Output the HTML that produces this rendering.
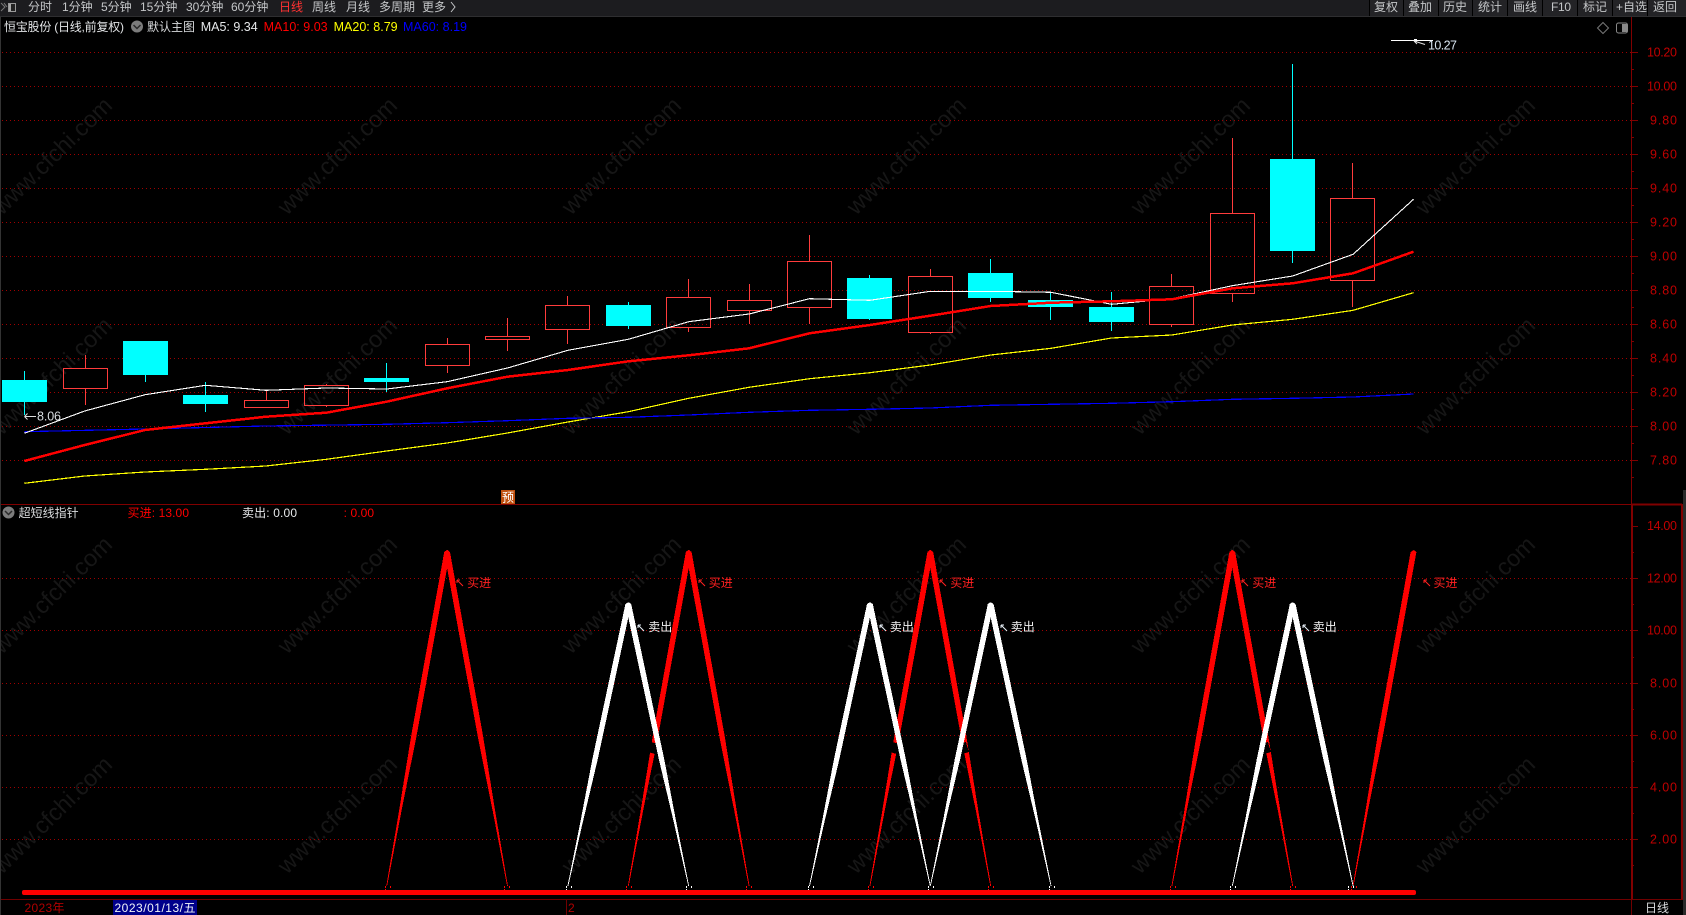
<!DOCTYPE html>
<html><head><meta charset="utf-8"><title>恒宝股份</title>
<style>
html,body{margin:0;padding:0;background:#000;overflow:hidden}
svg{display:block;position:absolute;left:0;top:0}
text{font-family:"Liberation Sans","Noto Sans CJK SC",sans-serif;font-size:12px;white-space:pre}
.m{fill:#c4c6c8}
.ax{fill:#c00000;font-size:12.5px}
.wm{fill:#161616;font-size:23.5px}
</style></head><body>
<svg width="1686" height="915" viewBox="0 0 1686 915" xmlns="http://www.w3.org/2000/svg">
<defs><polygon id="leg" points="-0.006,0 0,-2.9 0.55,-2.7 0.78,-1.2 1,-0.4 1,0.4 0.78,1.2 0.55,2.7 0,2.9"/></defs>
<rect width="1686" height="915" fill="#000"/>

<!-- watermarks -->
<g>
<text class="wm" textLength="156" transform="translate(2,216) rotate(-44.3)">www.cfchi.com</text>
<text class="wm" textLength="156" transform="translate(287,216) rotate(-44.3)">www.cfchi.com</text>
<text class="wm" textLength="156" transform="translate(571,216) rotate(-44.3)">www.cfchi.com</text>
<text class="wm" textLength="156" transform="translate(856,216) rotate(-44.3)">www.cfchi.com</text>
<text class="wm" textLength="156" transform="translate(1140,216) rotate(-44.3)">www.cfchi.com</text>
<text class="wm" textLength="156" transform="translate(1425,216) rotate(-44.3)">www.cfchi.com</text>
<text class="wm" textLength="156" transform="translate(2,436) rotate(-44.3)">www.cfchi.com</text>
<text class="wm" textLength="156" transform="translate(287,436) rotate(-44.3)">www.cfchi.com</text>
<text class="wm" textLength="156" transform="translate(571,436) rotate(-44.3)">www.cfchi.com</text>
<text class="wm" textLength="156" transform="translate(856,436) rotate(-44.3)">www.cfchi.com</text>
<text class="wm" textLength="156" transform="translate(1140,436) rotate(-44.3)">www.cfchi.com</text>
<text class="wm" textLength="156" transform="translate(1425,436) rotate(-44.3)">www.cfchi.com</text>
<text class="wm" textLength="156" transform="translate(2,655) rotate(-44.3)">www.cfchi.com</text>
<text class="wm" textLength="156" transform="translate(287,655) rotate(-44.3)">www.cfchi.com</text>
<text class="wm" textLength="156" transform="translate(571,655) rotate(-44.3)">www.cfchi.com</text>
<text class="wm" textLength="156" transform="translate(856,655) rotate(-44.3)">www.cfchi.com</text>
<text class="wm" textLength="156" transform="translate(1140,655) rotate(-44.3)">www.cfchi.com</text>
<text class="wm" textLength="156" transform="translate(1425,655) rotate(-44.3)">www.cfchi.com</text>
<text class="wm" textLength="156" transform="translate(2,875) rotate(-44.3)">www.cfchi.com</text>
<text class="wm" textLength="156" transform="translate(287,875) rotate(-44.3)">www.cfchi.com</text>
<text class="wm" textLength="156" transform="translate(571,875) rotate(-44.3)">www.cfchi.com</text>
<text class="wm" textLength="156" transform="translate(856,875) rotate(-44.3)">www.cfchi.com</text>
<text class="wm" textLength="156" transform="translate(1140,875) rotate(-44.3)">www.cfchi.com</text>
<text class="wm" textLength="156" transform="translate(1425,875) rotate(-44.3)">www.cfchi.com</text>
</g>

<!-- toolbar -->
<rect x="0" y="0" width="1686" height="16" fill="#1c1c1f"/>
<rect x="0" y="16" width="1686" height="1" fill="#2e2e30"/>
<rect x="1369" y="0" width="317" height="16" fill="#232326"/>
<g fill="#000" shape-rendering="crispEdges">
<rect x="1369" y="0" width="1" height="16"/><rect x="1403" y="0" width="1" height="16"/><rect x="1438" y="0" width="1" height="16"/><rect x="1472" y="0" width="1" height="16"/><rect x="1507" y="0" width="1" height="16"/><rect x="1542" y="0" width="1" height="16"/><rect x="1577" y="0" width="1" height="16"/><rect x="1612" y="0" width="1" height="16"/><rect x="1647" y="0" width="1" height="16"/>
</g>
<path d="M1 3L5 7L1 11M4 3L7 7" fill="none" stroke="#777" stroke-width="1"/>
<rect x="8.5" y="3.5" width="7" height="8" fill="#222" stroke="#999"/>
<rect x="9" y="4" width="2" height="7" fill="#aaa"/>
<g class="m">
<text class="m" x="28" y="11">分时</text>
<text class="m" x="62" y="11">1分钟</text>
<text class="m" x="101" y="11">5分钟</text>
<text class="m" x="140" y="11">15分钟</text>
<text class="m" x="186" y="11">30分钟</text>
<text class="m" x="231" y="11">60分钟</text>
<text x="279" y="11" fill="#ff3232">日线</text>
<text class="m" x="312" y="11">周线</text>
<text class="m" x="346" y="11">月线</text>
<text class="m" x="379" y="11">多周期</text>
<text class="m" x="422" y="11">更多</text>
<path d="M451 2L455 7L451 12" fill="none" stroke="#c4c6c8"/>
<text class="m" x="1374" y="11">复权</text>
<text class="m" x="1408" y="11">叠加</text>
<text class="m" x="1443" y="11">历史</text>
<text class="m" x="1478" y="11">统计</text>
<text class="m" x="1513" y="11">画线</text>
<text class="m" x="1551" y="11" textLength="20">F10</text>
<text class="m" x="1583" y="11">标记</text>
<text class="m" x="1616" y="11">+自选</text>
<text class="m" x="1653" y="11">返回</text>
</g>

<!-- header -->
<text x="4" y="31" fill="#e2e4e6" textLength="120">恒宝股份 (日线,前复权)</text>
<circle cx="137" cy="26.5" r="6" fill="#7c7c7c"/>
<path d="M133.5 25L137 28.5L140.5 25" fill="none" stroke="#2a2a2a" stroke-width="1.5"/>
<text x="147" y="31" fill="#d8dadc">默认主图</text>
<text x="200.7" y="31" fill="#e6e8ea" style="font-size:12.5px" textLength="57">MA5: 9.34</text>
<text x="263.6" y="31" fill="#ff0000" style="font-size:12.5px" textLength="64">MA10: 9.03</text>
<text x="333.6" y="31" fill="#ffff00" style="font-size:12.5px" textLength="64">MA20: 8.79</text>
<text x="403" y="31" fill="#0000ff" style="font-size:12.5px" textLength="64">MA60: 8.19</text>
<path d="M1603 22.5L1608.500 28L1603 33.500L1597.500 28Z" fill="none" stroke="#777"/>
<rect x="1616.500" y="23" width="11" height="10" rx="2" fill="none" stroke="#888"/>
<rect x="1622" y="24" width="5" height="8" fill="#888"/>

<!-- grid -->
<g stroke="#a00000" stroke-width="1" stroke-dasharray="1 3" fill="none" shape-rendering="crispEdges">
<path d="M2 52.5H1631M2 86.500H1631M2 120.500H1631M2 154.500H1631M2 188.500H1631M2 222.500H1631M2 256.500H1631M2 290.500H1631M2 324.500H1631M2 358.500H1631M2 392.500H1631M2 426.500H1631M2 460.500H1631"/>
<path d="M2 578.500H1631M2 630.500H1631M2 683.500H1631M2 735.500H1631M2 787.500H1631M2 839.500H1631"/>
</g>

<!-- axes and frames -->
<g stroke="#800000" fill="none" shape-rendering="crispEdges">
<path d="M1631.500 17V505"/>
<path d="M1631 52.500h7M1631 86.500h7M1631 120.500h7M1631 154.500h7M1631 188.500h7M1631 222.500h7M1631 256.500h7M1631 290.500h7M1631 324.500h7M1631 358.500h7M1631 392.500h7M1631 426.500h7M1631 460.500h7"/>
<path d="M1631 69.500h3M1631 103.500h3M1631 137.500h3M1631 171.500h3M1631 205.500h3M1631 239.500h3M1631 273.500h3M1631 307.500h3M1631 341.500h3M1631 375.500h3M1631 409.500h3M1631 443.500h3M1631 477.500h3"/>
<path d="M0 504.500H1631"/>
<path d="M1632 504.500H1682" stroke-width="2"/>
<path d="M1632 505V899" stroke-width="2"/>
<path d="M1682 504V899" stroke-width="2"/>
<path d="M1631 526.500h7M1631 578.500h7M1631 630.500h7M1631 683.500h7M1631 735.500h7M1631 787.500h7M1631 839.500h7"/>
<path d="M1631 552.500h3M1631 604.500h3M1631 657.500h3M1631 709.500h3M1631 761.500h3M1631 813.500h3M1631 865.500h3"/>
<path d="M0 899.500H1683" stroke="#700000"/>
<path d="M1631.500 899V915M566.500 899V915" stroke="#700000"/>
</g>
<rect x="0" y="17" width="1" height="898" fill="#333"/>
<rect x="1683" y="490" width="3" height="425" fill="#2a2a2a"/>

<!-- axis labels -->
<text class="ax" x="1647" y="56.500" textLength="30">10.20</text>
<text class="ax" x="1647" y="90.500" textLength="30">10.00</text>
<text class="ax" x="1650" y="124.500" textLength="27">9.80</text>
<text class="ax" x="1650" y="158.500" textLength="27">9.60</text>
<text class="ax" x="1650" y="192.500" textLength="27">9.40</text>
<text class="ax" x="1650" y="226.500" textLength="27">9.20</text>
<text class="ax" x="1650" y="260.500" textLength="27">9.00</text>
<text class="ax" x="1650" y="294.500" textLength="27">8.80</text>
<text class="ax" x="1650" y="328.500" textLength="27">8.60</text>
<text class="ax" x="1650" y="362.500" textLength="27">8.40</text>
<text class="ax" x="1650" y="396.500" textLength="27">8.20</text>
<text class="ax" x="1650" y="430.500" textLength="27">8.00</text>
<text class="ax" x="1650" y="464.500" textLength="27">7.80</text>
<text class="ax" x="1647" y="530" textLength="30">14.00</text>
<text class="ax" x="1647" y="582.500" textLength="30">12.00</text>
<text class="ax" x="1647" y="634.500" textLength="30">10.00</text>
<text class="ax" x="1650" y="687.500" textLength="27">8.00</text>
<text class="ax" x="1650" y="739.500" textLength="27">6.00</text>
<text class="ax" x="1650" y="791.500" textLength="27">4.00</text>
<text class="ax" x="1650" y="843.500" textLength="27">2.00</text>

<!-- candles -->
<g shape-rendering="crispEdges">
<path stroke="#00ffff" fill="none" d="M24.500 371V415M145.500 341V382M205.500 382V412M386.500 363V392M628.500 302V329M869.500 275V320M990.500 259V302M1050.500 292V320M1111.500 292V331M1292.500 64V263"/>
<g fill="#00ffff">
<rect x="2" y="380" width="45" height="22"/><rect x="123" y="341" width="45" height="34"/><rect x="183" y="395" width="45" height="9"/><rect x="364" y="378" width="45" height="4"/><rect x="606" y="305" width="45" height="21"/><rect x="847" y="278" width="45" height="41"/><rect x="968" y="273" width="45" height="25"/><rect x="1028" y="300" width="45" height="7"/><rect x="1089" y="307" width="45" height="15"/><rect x="1270" y="159" width="45" height="92"/>
</g>
<g fill="none" stroke="#ff3c3c">
<path d="M85.500 355V368M85.500 389V405M266.500 391V400M326.500 384V385M326.500 406V407M447.500 338V344M447.500 366V373M507.500 318V336M507.500 340V351M567.500 296V305M567.500 330V344M688.500 279V297M688.500 328V332M749.500 284V300M749.500 311V324M809.500 235V261M809.500 308V324M930.500 269V276M930.500 333V334M1171.500 274V286M1171.500 325V327M1232.500 138V213M1232.500 294V302M1352.500 163V198M1352.500 281V307"/>
<rect x="63.500" y="368.500" width="44" height="20"/>
<rect x="244.500" y="400.500" width="44" height="7"/>
<rect x="304.500" y="385.500" width="44" height="20"/>
<rect x="425.500" y="344.500" width="44" height="21"/>
<rect x="485.500" y="336.500" width="44" height="3"/>
<rect x="545.500" y="305.500" width="44" height="24"/>
<rect x="666.500" y="297.500" width="44" height="30"/>
<rect x="727.500" y="300.500" width="44" height="10"/>
<rect x="787.500" y="261.500" width="44" height="46"/>
<rect x="908.500" y="276.500" width="44" height="56"/>
<rect x="1149.500" y="286.500" width="44" height="38"/>
<rect x="1210.500" y="213.500" width="44" height="80"/>
<rect x="1330.500" y="198.500" width="44" height="82"/>
</g>
</g>

<!-- MA lines -->
<g fill="none" shape-rendering="crispEdges" stroke-linejoin="round">
<polyline stroke="#ffff00" stroke-width="1.2" points="24.300,483.300 84.700,476 145.100,472 205.500,469.300 265.900,466 326.300,459.300 386.700,451 447.100,443 507.500,433 567.900,422 628.300,411.700 688.700,398.300 749.100,387.300 809.500,378.700 869.900,372.700 930.300,365 990.700,355 1051.100,348.300 1111.500,338 1171.900,335 1232.300,325 1292.700,319.300 1353.100,310.300 1413.500,292.700"/>
<polyline stroke="#0000ff" stroke-width="1.2" points="24.300,431.700 145.100,429 265.900,426 386.700,424.300 447.100,422.700 507.500,420.700 567.900,418.300 628.300,417.300 688.700,415 749.100,412.300 809.500,410.300 869.900,409.300 930.300,408 990.700,405.300 1051.100,404.300 1111.500,403.300 1171.900,401.700 1232.300,399.300 1292.700,398.300 1353.100,397 1413.500,394"/>
<polyline stroke="#ffffff" stroke-width="1.1" points="24.300,433.300 84.700,411 145.100,394.700 205.500,385.300 265.900,390.300 326.300,388 386.700,389 447.100,381.700 507.500,368 567.900,350.300 628.300,339.300 688.700,321.700 749.100,314 809.500,298.700 869.900,300.300 930.300,291.300 990.700,291.300 1051.100,292.300 1111.500,304.300 1171.900,298.700 1232.300,285.700 1292.700,276 1353.100,254.300 1413.500,199.300"/>
<polyline stroke="#ff0000" stroke-width="2.5" points="24.300,461 84.700,445 145.100,430 205.500,423.300 265.900,416.700 326.300,412.700 386.700,401.700 447.100,388.300 507.500,376.700 567.900,370 628.300,361.300 688.700,355.300 749.100,348.300 809.500,333.300 869.900,325 930.300,315.700 990.700,306 1051.100,302.700 1111.500,301.300 1171.900,299.300 1232.300,288.300 1292.700,283.300 1353.100,273.300 1413.500,251.700"/>
</g>

<!-- annotations -->
<path d="M1391 40.500H1433" stroke="#fff" fill="none" shape-rendering="crispEdges"/>
<rect x="1414" y="39" width="3" height="3" fill="#fff"/>
<path d="M1414 41L1425 44.500M1414 41l3 3" stroke="#ddd" fill="none"/>
<text x="1428" y="49.500" fill="#d8e4f0" textLength="29" style="font-size:12.500px">10.27</text>
<path d="M24.500 416.500H36M24.500 416.500l3 -3M24.500 416.500l3 3" stroke="#ddd" fill="none"/>
<text x="37" y="420.500" fill="#d8dcdf" textLength="24" style="font-size:12.500px">8.06</text>
<rect x="501" y="490" width="14" height="14" fill="#c0500f"/>
<text x="502" y="501.500" fill="#fff">预</text>

<!-- indicator header -->
<circle cx="8.500" cy="512.500" r="6" fill="#7c7c7c"/>
<path d="M5 511L8.500 514.500L12 511" fill="none" stroke="#2a2a2a" stroke-width="1.500"/>
<text x="18.600" y="517" fill="#d8dadc">超短线指针</text>
<text x="127.500" y="517" fill="#ff0000" textLength="61.500">买进: 13.00</text>
<text x="242" y="517" fill="#e6e8ea" textLength="55">卖出: 0.00</text>
<text x="343.600" y="517" fill="#ff0000" textLength="30.500">: 0.00</text>

<!-- indicator triangles -->
<g fill="#ff0000" shape-rendering="crispEdges">
<use href="#leg" transform="matrix(-60.400 334 1 0 447.100 552)"/>
<use href="#leg" transform="matrix(60.400 334 1 0 447.100 552)"/>
<use href="#leg" transform="matrix(-60.400 334 1 0 688.700 552)"/>
<use href="#leg" transform="matrix(60.400 334 1 0 688.700 552)"/>
<use href="#leg" transform="matrix(-60.400 334 1 0 930.300 552)"/>
<use href="#leg" transform="matrix(60.400 334 1 0 930.300 552)"/>
<use href="#leg" transform="matrix(-60.400 334 1 0 1232.300 552)"/>
<use href="#leg" transform="matrix(60.400 334 1 0 1232.300 552)"/>
<use href="#leg" transform="matrix(-60.400 334 1 0 1413.500 552)"/>
</g>
<path d="M654.500 743L651.600 753M896.100 743L893.200 753M962.600 743L965.500 753M1264.600 743L1267.500 753" stroke="#000" stroke-width="7" fill="none" shape-rendering="crispEdges"/>
<g fill="#ffffff" shape-rendering="crispEdges">
<use href="#leg" transform="matrix(-60.400 282 1 0 628.300 604)"/>
<use href="#leg" transform="matrix(60.400 282 1 0 628.300 604)"/>
<use href="#leg" transform="matrix(-60.400 282 1 0 869.900 604)"/>
<use href="#leg" transform="matrix(60.400 282 1 0 869.900 604)"/>
<use href="#leg" transform="matrix(-60.400 282 1 0 990.700 604)"/>
<use href="#leg" transform="matrix(60.400 282 1 0 990.700 604)"/>
<use href="#leg" transform="matrix(-60.400 282 1 0 1292.700 604)"/>
<use href="#leg" transform="matrix(60.400 282 1 0 1292.700 604)"/>
</g>
<g fill="none" stroke-width="1" shape-rendering="crispEdges">
<path stroke="#ff0000" stroke-dasharray="2 1" d="M385.500 886v4M390.500 886v3M504.500 886v4M509.500 886v3M626.500 886v4M631.500 886v3M746.500 886v4M751.500 886v3M868.500 886v4M873.500 886v3M988.500 886v4M993.500 886v3M1170.500 886v4M1175.500 886v3M1290.500 886v4M1295.500 886v3M1351.500 886v4M1356.500 886v3"/>
<path stroke="#ffffff" stroke-dasharray="2 1" d="M566.500 886v4M571.500 886v3M686.500 886v4M691.500 886v3M808.500 886v4M813.500 886v3M928.500 886v4M933.500 886v3M1049.500 886v4M1054.500 886v3M1230.500 886v4M1235.500 886v3M1348.500 886v4M1353.500 886v3"/>
</g>
<rect x="22" y="890" width="1394" height="5" rx="2" fill="#ff0000"/>

<!-- buy / sell labels -->
<g fill="none" stroke="#ff2020">
<path d="M457 580l6 6M457 580h3M457 580v3M699 580l6 6M699 580h3M699 580v3M940 580l6 6M940 580h3M940 580v3M1242 580l6 6M1242 580h3M1242 580v3M1424 580l6 6M1424 580h3M1424 580v3"/>
</g>
<g fill="none" stroke="#e8f0f8">
<path d="M638 625l6 6M638 625h3M638 625v3M880 625l6 6M880 625h3M880 625v3M1001 625l6 6M1001 625h3M1001 625v3M1303 625l6 6M1303 625h3M1303 625v3"/>
</g>
<g fill="#ff2020">
<text x="467.100" y="587">买进</text><text x="708.700" y="587">买进</text><text x="950.300" y="587">买进</text><text x="1252.300" y="587">买进</text><text x="1433.500" y="587">买进</text>
</g>
<g fill="#f2f2f2">
<text x="648.300" y="631">卖出</text><text x="889.900" y="631">卖出</text><text x="1010.700" y="631">卖出</text><text x="1312.700" y="631">卖出</text>
</g>

<!-- time axis -->
<text x="24.500" y="912" fill="#b00000" textLength="40">2023年</text>
<rect x="113" y="900" width="84" height="15" fill="#00008b"/>
<text x="114.500" y="912" fill="#f0f4f8" textLength="81">2023/01/13/五</text>
<text x="568" y="912" fill="#b00000">2</text>
<text x="1645" y="912" fill="#d8dadc">日线</text>
</svg>
</body></html>
